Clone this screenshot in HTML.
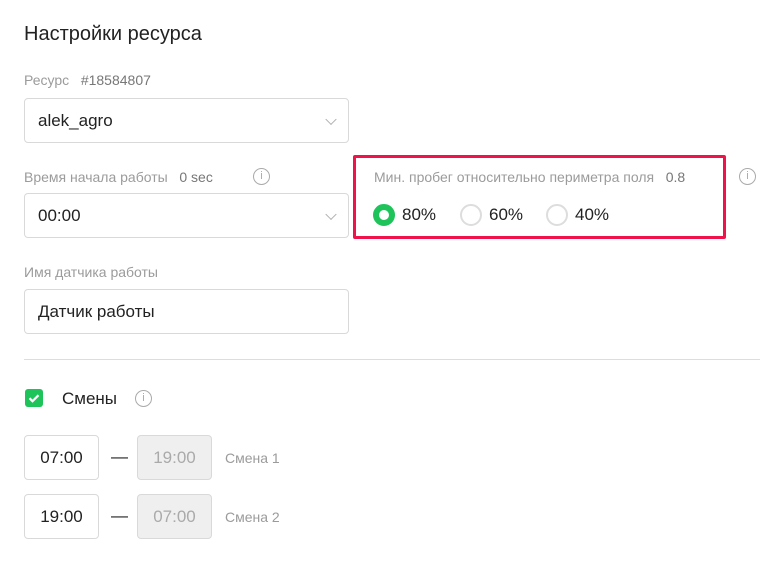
<!DOCTYPE html>
<html><head><meta charset="utf-8"><style>
body{margin:0;width:784px;height:562px;background:#fff;font-family:"Liberation Sans",Roboto,sans-serif;position:relative;overflow:hidden;color:#222}
.a{position:absolute;white-space:nowrap}
.lbl{font-size:14px;color:#9b9b9b}
.box{position:absolute;border:1px solid #d9d9d9;border-radius:4px;box-sizing:border-box;font-size:17px;color:#222;padding-left:13px;display:flex;align-items:center}
.chev{position:absolute;right:13px;top:50%;width:7px;height:7px;border-right:1.2px solid #b0b0b0;border-bottom:1.2px solid #b0b0b0;transform:translateY(-70%) rotate(45deg)}
.info{position:absolute;width:17px;height:17px;border:1.3px solid #aaa;border-radius:50%;box-sizing:border-box;color:#aaa;font-size:11px;text-align:center;line-height:15px;font-family:"Liberation Sans",sans-serif}
.rad{position:absolute;width:22px;height:22px;border-radius:50%;box-sizing:border-box;border:2.5px solid #ddd}
.t{position:absolute;border:1px solid #d9d9d9;border-radius:4px;box-sizing:border-box;width:75px;height:45px;font-size:17px;text-align:center;line-height:43px}
</style></head><body>
<div class="a" style="left:24px;top:23px;font-size:20px;color:#222">Настройки ресурса</div>
<div class="a lbl" style="left:24px;top:72px">Ресурс&nbsp;&nbsp;&nbsp;<span style="color:#777">#18584807</span></div>
<div class="box" style="left:24px;top:98px;width:325px;height:45px">alek_agro<div class="chev"></div></div>
<div class="a lbl" style="left:24px;top:169px">Время начала работы&nbsp;&nbsp;&nbsp;<span style="color:#777">0 sec</span></div>
<div class="info" style="left:253px;top:168px">i</div>
<div class="box" style="left:24px;top:193px;width:325px;height:45px">00:00<div class="chev"></div></div>
<div class="a" style="left:353px;top:155px;width:373px;height:84px;border:3px solid #f0124a;border-radius:2px;box-sizing:border-box"></div>
<div class="a lbl" style="left:374px;top:169px">Мин. пробег относительно периметра поля&nbsp;&nbsp;&nbsp;<span style="color:#777">0.8</span></div>
<div class="info" style="left:739px;top:168px">i</div>
<div class="rad" style="left:373px;top:204px;border:6px solid #1ec45a"></div>
<div class="a" style="left:402px;top:205px;font-size:17px">80%</div>
<div class="rad" style="left:460px;top:204px"></div>
<div class="a" style="left:489px;top:205px;font-size:17px">60%</div>
<div class="rad" style="left:546px;top:204px"></div>
<div class="a" style="left:575px;top:205px;font-size:17px">40%</div>
<div class="a lbl" style="left:24px;top:264px">Имя датчика работы</div>
<div class="box" style="left:24px;top:289px;width:325px;height:45px">Датчик работы</div>
<div class="a" style="left:24px;top:359px;width:736px;height:1px;background:#ddd"></div>
<div class="a" style="left:25px;top:389px;width:18px;height:18px;background:#1ec45a;border-radius:3px"><svg width="18" height="18"><path d="M4.5 9.2l3 3 6-6" stroke="#fff" stroke-width="2.2" fill="none"/></svg></div>
<div class="a" style="left:62px;top:389px;font-size:17px">Смены</div>
<div class="info" style="left:135px;top:390px">i</div>
<div class="t" style="left:24px;top:435px">07:00</div>
<div class="a" style="left:111px;top:447px;font-size:17px">—</div>
<div class="t" style="left:137px;top:435px;background:#efefef;color:#aaa">19:00</div>
<div class="a lbl" style="left:225px;top:450px">Смена 1</div>
<div class="t" style="left:24px;top:494px">19:00</div>
<div class="a" style="left:111px;top:506px;font-size:17px">—</div>
<div class="t" style="left:137px;top:494px;background:#efefef;color:#aaa">07:00</div>
<div class="a lbl" style="left:225px;top:509px">Смена 2</div>
</body></html>
